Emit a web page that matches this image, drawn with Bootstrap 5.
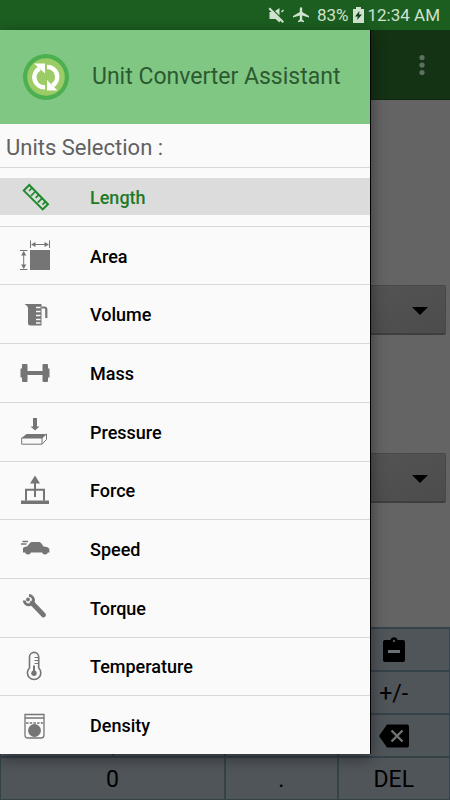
<!DOCTYPE html>
<html lang="en">
<head>
<meta charset="utf-8">
<meta name="viewport" content="width=device-width, initial-scale=1">
<title>Unit Converter Assistant</title>
<link href="https://cdn.jsdelivr.net/npm/bootstrap@5.3.0/dist/css/bootstrap.min.css" rel="stylesheet">
<style>
  body { font-family: Roboto, "Noto Sans", sans-serif; background: #646464; }
  .status-strip { height: 30px; background: #1b5e20; color: #cfe3cf; font-size: 17px; line-height: 30px; padding-right: 10px; gap: 4px; }
  .app-bar { height: 70px; background: #143214; border-bottom: 1px solid #102810; padding-right: 13px; }
  .more-btn { width: 30px; height: 30px; color: #5f6f5f; }
  .fields { padding: 185px 4px 0; gap: 118px; }
  .unit-select { height: 50px; border: 1px solid #484848; border-bottom: 2px solid #3e3e3e; border-radius: 2px; background: linear-gradient(160deg, #606060, #4c4c4c); }
  .caret-icon { position: absolute; right: 18px; top: 22px; pointer-events: none; }
  .keypad { background: #35424a; border-top: 1px solid #35424a; }
  .pad-key { height: 43px; border: 1px solid #35424a; border-radius: 0; background: #50555a; color: #000; font-size: 23px; line-height: 1; padding: 2px 0 0; }
  .drawer { position: absolute; top: 30px; bottom: 46px; left: 0; width: 371px; background: #fafafa; border-right: 1px solid #000; box-shadow: 0 4px 14px rgba(0,0,0,.45); }
  .drawer-head { height: 94px; background: #81c784; color: #2c5a30; padding-left: 23px; gap: 23px; font-size: 23px; }
  .drawer-title { height: 44px; color: #616161; font-size: 22px; padding: 3px 0 0 6px; border-bottom: 1px solid #d8d8d8; }
  .unit-item { flex: 1 1 0; border-bottom: 1px solid #d8d8d8; }
  .unit-item:last-child { border-bottom: 0; }
  .unit-link { height: 37px; padding: 1px 0 0 19px; gap: 39px; color: #000; font-size: 18px; font-weight: 500; }
  .unit-link svg { color: #757575; }
  .unit-link.chosen { background: #dcdcdc; color: #1f7a26; }
  .unit-link.chosen svg { color: #1f8a2c; }
</style>
</head>
<body>
<div class="position-relative vh-100 d-flex flex-column overflow-hidden">
  <header class="status-strip d-flex align-items-center justify-content-end">
    <svg width="18" height="18" viewBox="0 0 18 18" fill="currentColor" class="me-1" aria-hidden="true"><path d="M2.500 6h3l8 8-1 2.500L8.500 13H2.500zM8 5l4.500-3v7.500zM1.500 3l1.500-1.500L17 15.500 15.500 17zM14 5.500l2-2 1 1-2 2z"/></svg>
    <svg width="16" height="16" viewBox="0 0 16 16" fill="currentColor" class="me-1" aria-hidden="true"><path d="M16 10.500V9L9.200 5V1.500a1.200 1.200 0 0 0-2.400 0V5L0 9v1.500l6.800-2v4L5 14v1.200l3-.8 3 .8V14l-1.800-1.500v-4z"/></svg>
    <span>83%</span>
    <svg width="11" height="16" viewBox="0 0 11 16" aria-hidden="true"><path d="M3 0h5v2h3v14H0V2h3z" fill="currentColor"/><path d="M6.500 4 2 9.500h2.800L4 13l5-5.500H6z" fill="#0f3d14"/></svg>
    <span>12:34 AM</span>
  </header>
  <div class="app-bar d-flex align-items-center justify-content-end">
    <button type="button" class="more-btn btn p-0 border-0 d-flex align-items-center justify-content-center" aria-label="More options">
      <svg width="6" height="22" viewBox="0 0 6 22" fill="currentColor"><circle cx="3" cy="3.500" r="2.600"/><circle cx="3" cy="11" r="2.600"/><circle cx="3" cy="18.500" r="2.600"/></svg>
    </button>
  </div>
  <main class="fields flex-grow-1 d-flex flex-column">
    <div class="position-relative">
      <select class="unit-select form-select" aria-label="From unit"><option></option></select>
      <svg class="caret-icon" width="16" height="8" viewBox="0 0 16 8"><path d="M0 0h16L8 8z"/></svg>
    </div>
    <div class="position-relative">
      <select class="unit-select form-select" aria-label="To unit"><option></option></select>
      <svg class="caret-icon" width="16" height="8" viewBox="0 0 16 8"><path d="M0 0h16L8 8z"/></svg>
    </div>
  </main>
  <div class="keypad">
    <div class="row g-0">
      <button type="button" class="pad-key btn col-3 offset-9 pt-0" aria-label="Paste"><svg width="24" height="26" viewBox="0 0 24 26"><path d="M3 3h5.500a3.600 3.600 0 0 1 7 0H21q2 0 2 2v18q0 2-2 2H3q-2 0-2-2V5q0-2 2-2z"/><circle cx="12" cy="4" r="1.200" fill="#50555a"/><path d="M6 13h12v3H6z" fill="#6a6f73"/></svg></button>
    </div>
    <div class="row g-0"><button type="button" class="pad-key btn col-3 offset-9">+/-</button></div>
    <div class="row g-0">
      <div class="pad-key col-3"></div><div class="pad-key col-3"></div><div class="pad-key col-3"></div>
      <button type="button" class="pad-key btn col-3 pt-0" aria-label="Backspace"><svg width="30" height="24" viewBox="0 0 30 24"><path d="M8 0.500h20q2 0 2 2v19q0 2-2 2H8L0 12z"/><path d="m12.500 6.500 11 11m0-11-11 11" stroke="#70757a" stroke-width="2.400"/></svg></button>
    </div>
    <div class="row g-0">
      <button type="button" class="pad-key btn col-6">0</button>
      <button type="button" class="pad-key btn col-3">.</button>
      <button type="button" class="pad-key btn col-3">DEL</button>
    </div>
  </div>

  <nav class="drawer d-flex flex-column" aria-label="Units">
    <div class="drawer-head d-flex align-items-center">
      <svg width="46" height="46" viewBox="0 0 46 46" aria-hidden="true"><circle cx="23" cy="23" r="23" fill="#4caf50"/><circle cx="23" cy="23" r="18.800" fill="#9ccc65"/><g fill="none" stroke="#fff" stroke-width="4.600"><path d="M16.500 14.500A10 10 0 0 0 22 33.200"/><path d="M24 13A10 10 0 0 1 29.500 31.500"/></g><path d="M11 9.500h11v10zM24 26v10.500h10.500z" fill="#fff"/></svg>
      <span>Unit Converter Assistant</span>
    </div>
    <div class="drawer-title d-flex align-items-center">Units Selection :</div>
    <ul class="list-unstyled m-0 flex-grow-1 d-flex flex-column">
      <li class="unit-item d-flex flex-column justify-content-center"><a href="#length" class="unit-link chosen d-flex align-items-center text-decoration-none" aria-current="true">
        <svg width="32" height="32" viewBox="0 0 32 32" fill="none" stroke="currentColor" stroke-width="2"><path d="M10.300 4 29 23.200l-5.300 5.200L4.800 9.600z"/><path d="m13 7-3 3m6.300.5-4.300 4.300m7.700-1-3 3m6.300.5-4.300 4.300m7.800-1-3 3" stroke-width="1.700"/></svg>Length</a></li>
      <li class="unit-item d-flex flex-column justify-content-center"><a href="#area" class="unit-link d-flex align-items-center text-decoration-none">
        <svg width="32" height="32" viewBox="0 0 32 32" fill="currentColor"><path d="M11 10h20v20H11z"/><path d="M11.500.5V8m19-7.500V8M13 4.500h16M1 10.500h7.500M1 29.500h7.500M4.700 12v16" fill="none" stroke="currentColor"/><path d="m12 4.500 4.500-2.500v5zM30 4.500 25.500 2v5zM4.700 11l2.600 4.500H2.100zM4.700 29l2.600-4.500H2.100z"/></svg>Area</a></li>
      <li class="unit-item d-flex flex-column justify-content-center"><a href="#volume" class="unit-link d-flex align-items-center text-decoration-none">
        <svg width="32" height="32" viewBox="0 0 32 32" fill="currentColor"><path d="M5.500 5h17v21.500H11.500Q9 26.500 9 24V9Q9 7 5.500 5z"/><path d="M22.500 8.500h3q1.800 0 1.800 2V19" fill="none" stroke="currentColor" stroke-width="2.200"/><path d="M17 8.500h4.500M17 12.500h4.500M17 16.500h4.500M17 20.500h4.500M17 24h4.500" stroke="#fafafa" stroke-width="1.500"/></svg>Volume</a></li>
      <li class="unit-item d-flex flex-column justify-content-center"><a href="#mass" class="unit-link d-flex align-items-center text-decoration-none">
        <svg width="32" height="32" viewBox="0 0 32 32" fill="currentColor"><rect x="3" y="7" width="5.500" height="18" rx="1"/><rect x="23.500" y="7" width="5.500" height="18" rx="1"/><path d="M1.500 11.500H3v9H1.500zM29 11.500h1.500v9H29zM8 14h16v4H8z"/></svg>Mass</a></li>
      <li class="unit-item d-flex flex-column justify-content-center"><a href="#pressure" class="unit-link d-flex align-items-center text-decoration-none">
        <svg width="32" height="32" viewBox="0 0 32 32" fill="currentColor"><path d="M14 2h4v8.500h2.500L16 14.500l-4.500-4H14zM7.500 18h20L23 22H2.500z"/><path d="M2.700 22h20.300v6.200H2.700zM23 28.200l4.500-4.700V18L23 22" fill="none" stroke="currentColor"/></svg>Pressure</a></li>
      <li class="unit-item d-flex flex-column justify-content-center"><a href="#force" class="unit-link d-flex align-items-center text-decoration-none">
        <svg width="32" height="32" viewBox="0 0 32 32" fill="currentColor"><path d="M2 25.500h28V29H2zM15 6h2v16h-2zM16 .5 21 8.500H11z"/><path d="M7 25.500V14.700h18v10.800" fill="none" stroke="currentColor" stroke-width="2"/></svg>Force</a></li>
      <li class="unit-item d-flex flex-column justify-content-center"><a href="#speed" class="unit-link d-flex align-items-center text-decoration-none">
        <svg width="32" height="32" viewBox="0 0 32 32" fill="currentColor"><path d="M4 18.500v-4q0-1.500 4-2l3-3.500q.8-1 2-1h7q1.200 0 2 1l2.500 3.500q5 .3 5.800 2.500l.2 3.500z"/><circle cx="9" cy="17.500" r="2.900"/><circle cx="26" cy="17.500" r="2.900"/><path d="M3.500 7.500H9M2 10h5.500" stroke="currentColor" stroke-width="1.300"/></svg>Speed</a></li>
      <li class="unit-item d-flex flex-column justify-content-center"><a href="#torque" class="unit-link d-flex align-items-center text-decoration-none">
        <svg width="32" height="32" viewBox="0 0 32 32" fill="none" stroke="currentColor"><path d="m13 11 11.500 12" stroke-width="4.800" stroke-linecap="round"/><path d="M10 3.600a4.600 4.600 0 1 1-4.700 4.900" stroke-width="3"/><circle cx="9" cy="7.500" r="1.900" fill="currentColor" stroke="none"/></svg>Torque</a></li>
      <li class="unit-item d-flex flex-column justify-content-center"><a href="#temperature" class="unit-link d-flex align-items-center text-decoration-none">
        <svg width="32" height="32" viewBox="0 0 32 32" fill="none" stroke="currentColor" stroke-width="1.600"><path d="M10.500 17V6a4.600 4.600 0 0 1 9.200 0v11a6.700 6.700 0 1 1-9.200 0z"/><path d="M15.500 6.500h3.500M15.500 9.500h3.500M15.500 12.500h3.500" stroke-width="1.100"/><path d="M15 14.500V22" stroke-width="2"/><circle cx="15" cy="22.300" r="2.700" fill="currentColor" stroke="none"/></svg>Temperature</a></li>
      <li class="unit-item d-flex flex-column justify-content-center"><a href="#density" class="unit-link d-flex align-items-center text-decoration-none">
        <svg width="32" height="32" viewBox="0 0 32 32" fill="none" stroke="currentColor" stroke-width="1.300"><path d="M6 4.500h19v20.500q0 3-3 3H9q-3 0-3-3zM6 8h19"/><path d="M7 13h17" stroke-dasharray="2.500 1.200"/><circle cx="15.500" cy="20.500" r="6.400" fill="currentColor" stroke="none"/></svg>Density</a></li>
    </ul>
  </nav>
</div>
<script src="https://cdn.jsdelivr.net/npm/bootstrap@5.3.0/dist/js/bootstrap.bundle.min.js"></script>
</body>
</html>
